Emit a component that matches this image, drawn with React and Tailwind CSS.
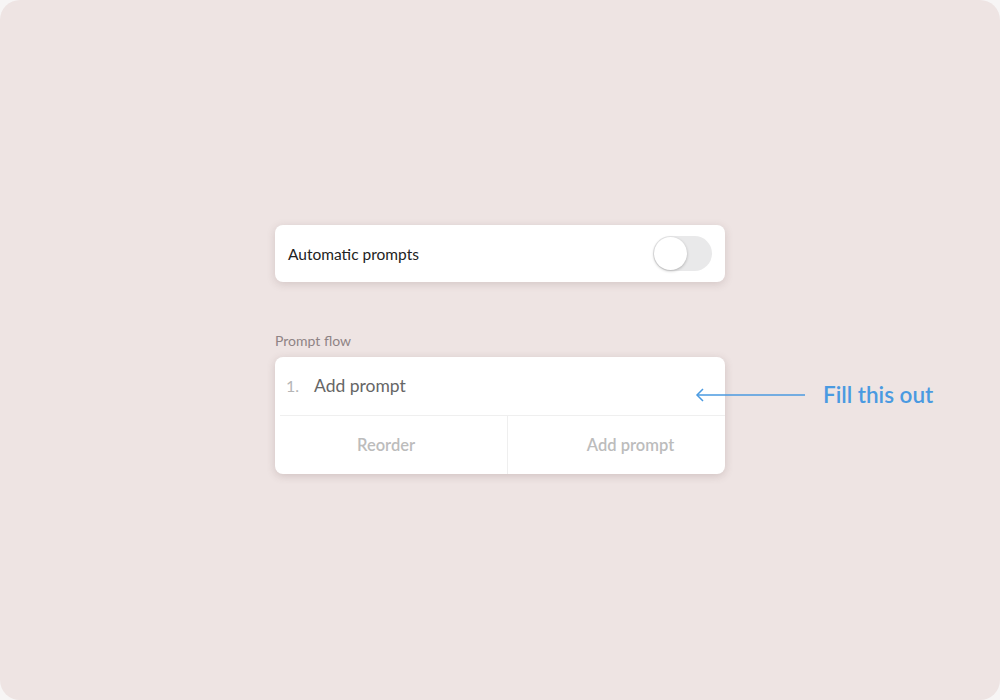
import React, { useState } from 'react';

function Toggle({ on, onChange }) {
  return (
    <button
      onClick={() => onChange(!on)}
      className="relative w-[59px] h-[35px] rounded-full bg-[#e9e9ea] shrink-0"
    >
      <span
        className={`absolute top-[1px] left-[1px] w-[33px] h-[33px] rounded-full bg-white shadow-[0_1px_3px_rgba(0,0,0,0.25)] ${on ? 'translate-x-[24px]' : ''}`}
      />
    </button>
  );
}

function App() {
  const [auto, setAuto] = useState(false);

  return (
    <div className="w-[1000px] h-[700px] bg-[#f7f5f5]">
      <div className="w-full h-full rounded-[20px] bg-[#eee4e3] flex flex-col items-center pt-[225px] font-['Lato','Noto_Sans',sans-serif]">
        <div className="w-[450px] h-[57px] bg-white rounded-[8px] shadow-[0_2px_8px_rgba(90,60,60,0.18)] flex items-center justify-between pl-[13px] pr-[13px]">
          <span className="text-[15.5px] text-[#222] pt-[2px]">Automatic prompts</span>
          <Toggle on={auto} onChange={setAuto} />
        </div>

        <div className="w-[450px] mt-[50px]">
          <div className="text-[14px] text-[#8e8385] leading-[17px] mb-[8px]">Prompt flow</div>
          <div className="relative bg-white rounded-[8px] shadow-[0_2px_8px_rgba(90,60,60,0.2)]">
            <div className="h-[59px] flex items-center pl-[6px] pt-[1px] border-b border-[#efefef] ml-[5px]">
              <div className="flex items-baseline">
                <span className="text-[16px] text-[#b5b5b5] w-[28px]">1.</span>
                <span className="text-[17.5px] text-[#666]">Add prompt</span>
              </div>
            </div>
            <div className="flex h-[58px]">
              <button className="w-[233px] flex items-center justify-center pr-[10px] border-r border-[#efefef] text-[16.5px] font-semibold text-[#bcbcbc]">
                Reorder
              </button>
              <button className="flex-1 flex items-center justify-center pl-[28px] text-[16.5px] font-semibold text-[#bcbcbc]">
                Add prompt
              </button>
            </div>

            <div className="absolute left-[420px] top-[27px] flex items-center">
              <svg width="112" height="14" viewBox="0 0 112 14" className="mr-[16px]">
                <path d="M2 7H110" stroke="#4a9ae1" strokeWidth="1.5" fill="none" />
                <path d="M8 1L2 7L8 13" stroke="#4a9ae1" strokeWidth="1.5" fill="none" />
              </svg>
              <span className="text-[22.5px] font-semibold text-[#4a9ae1] whitespace-nowrap leading-none">Fill this out</span>
            </div>
          </div>
        </div>
      </div>
    </div>
  );
}

export default App;
